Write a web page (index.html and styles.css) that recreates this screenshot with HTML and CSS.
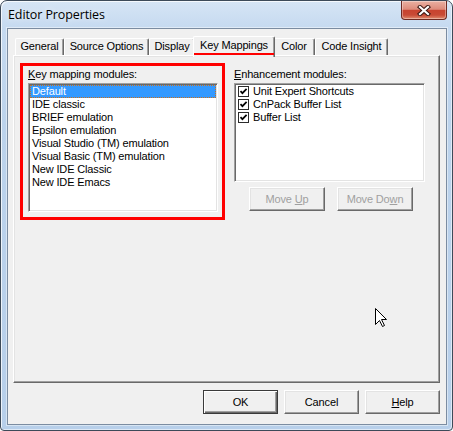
FILE: index.html
```html
<!DOCTYPE html>
<html>
<head>
<meta charset="utf-8">
<title>Editor Properties</title>
<link rel="stylesheet" href="styles.css">
</head>
<body>
<div class="window">
  <div class="titlebar">
    <span class="title">Editor Properties</span>
    <div class="close">
      <svg width="14" height="11" viewBox="0 0 14 11">
        <path d="M3 2 L11 9 M11 2 L3 9" stroke="#3b1712" stroke-width="4.2" stroke-linecap="square" fill="none"/>
        <path d="M3 2 L11 9 M11 2 L3 9" stroke="#ffffff" stroke-width="2.2" stroke-linecap="square" fill="none"/>
      </svg>
    </div>
  </div>
  <div class="client">
    <div class="tabs">
      <div class="tab t-general">General</div>
      <div class="tab t-source">Source Options</div>
      <div class="tab t-display">Display</div>
      <div class="tab active t-keys">Key Mappings</div>
      <div class="tab t-color">Color</div>
      <div class="tab t-code">Code Insight</div>
    </div>
    <div class="panel">
      <div class="mod-group">
        <div class="label"><u>K</u>ey mapping modules:</div>
        <div class="listbox keymaps">
          <div class="item selected">Default</div>
          <div class="item">IDE classic</div>
          <div class="item">BRIEF emulation</div>
          <div class="item">Epsilon emulation</div>
          <div class="item">Visual Studio (TM) emulation</div>
          <div class="item">Visual Basic (TM) emulation</div>
          <div class="item">New IDE Classic</div>
          <div class="item">New IDE Emacs</div>
        </div>
      </div>
      <div class="enh-group">
        <div class="label"><u>E</u>nhancement modules:</div>
        <div class="listbox checklist">
          <div class="item"><span class="check"><svg width="11" height="11" viewBox="0 0 11 11"><path d="M2.5 5.2 L4.4 7.2 L8.6 2.8" stroke="#000" stroke-width="1.7" fill="none"/></svg></span>Unit Expert Shortcuts</div>
          <div class="item"><span class="check"><svg width="11" height="11" viewBox="0 0 11 11"><path d="M2.5 5.2 L4.4 7.2 L8.6 2.8" stroke="#000" stroke-width="1.7" fill="none"/></svg></span>CnPack Buffer List</div>
          <div class="item"><span class="check"><svg width="11" height="11" viewBox="0 0 11 11"><path d="M2.5 5.2 L4.4 7.2 L8.6 2.8" stroke="#000" stroke-width="1.7" fill="none"/></svg></span>Buffer List</div>
        </div>
        <div class="move-buttons">
          <button class="btn" disabled>Move <u>U</u>p</button>
          <button class="btn" disabled>Move Do<u>w</u>n</button>
        </div>
      </div>
    </div>
    <div class="dlg-buttons">
      <button class="btn default">OK</button>
      <button class="btn">Cancel</button>
      <button class="btn"><u>H</u>elp</button>
    </div>
  </div>
  <svg class="cursor" width="13" height="20" viewBox="0 0 13 20">
    <path d="M0.5 0.5 L0.5 16.5 L4.5 12.5 L7.5 18.5 L9.5 17.5 L6.5 11.5 L11.5 11.5 Z" fill="#fff" stroke="#000" stroke-width="1"/>
  </svg>
</div>
</body>
</html>
```
FILE: styles.css
```css
* { box-sizing: border-box; }
html, body { margin: 0; padding: 0; }
body {
  width: 453px;
  height: 431px;
  overflow: hidden;
  background: #ffffff;
  font-family: "Liberation Sans", Arial, sans-serif;
  font-size: 11px;
  letter-spacing: -0.15px;
  color: #000;
}

.window {
  position: relative;
  width: 453px;
  height: 431px;
  border: 1px solid #3d4a59;
  border-radius: 7px 7px 4px 4px;
  background: linear-gradient(180deg, #d6e5f5 0px, #c6daf0 26px, #bcd3ec 120px, #b7cfea 100%);
  box-shadow: inset 1px 1px 0 rgba(255,255,255,0.75), inset -1px -1px 0 rgba(255,255,255,0.55);
  padding: 0 5px 5px 6px;
  display: flex;
  flex-direction: column;
}

.titlebar {
  height: 27px;
  display: flex;
  justify-content: space-between;
  align-items: flex-start;
  flex: none;
}
.title {
  font-family: "Open Sans", "Noto Sans", sans-serif;
  font-size: 12.5px;
  letter-spacing: -0.1px;
  line-height: 16px;
  margin: 6px 0 0 1px;
  color: #000;
  text-shadow: 0 0 6px rgba(255,255,255,0.9);
}
.close {
  width: 46px;
  height: 19px;
  margin-top: 0;
  border: 1px solid #6e2a22;
  border-top: none;
  border-radius: 0 0 4px 4px;
  background: linear-gradient(180deg, #eab0a2 0%, #dd8b7b 46%, #c8432f 52%, #c84a35 78%, #e08c6f 100%);
  box-shadow: inset 0 0 0 1px rgba(255,255,255,0.35);
  display: flex;
  align-items: center;
  justify-content: center;
}
.close svg { display: block; }

.client {
  flex: none;
  width: 440px;
  height: 397px;
  border: 1px solid #7b8ca1;
  background: #f0f0f0;
  box-shadow: 0 0 0 1px rgba(255,255,255,0.45);
  display: flex;
  flex-direction: column;
}

/* tabs */
.tabs {
  display: flex;
  align-items: flex-end;
  height: 19px;
  margin: 7px 0 0 7px;
  position: relative;
  z-index: 2;
}
.tab {
  height: 17px;
  line-height: 15px;
  text-align: center;
  white-space: nowrap;
  background: #f0f0f0;
  border-top: 1px solid #ffffff;
  border-left: 1px solid #ffffff;
  border-right: 1px solid #696969;
  box-shadow: inset -1px 0 0 #a0a0a0;
  border-radius: 2px 2px 0 0;
  flex: none;
}
.t-general { width: 49px; }
.t-source { width: 85px; }
.t-display { width: 46px; }
.t-keys { width: 82px; }
.t-color { width: 42px; }
.t-code { width: 73px; }
.tab.active {
  position: relative;
  z-index: 3;
  height: 21px;
  margin: 0 -2px -2px -2px;
  padding-top: 0;
  line-height: 16px;
}
.tab.active::after {
  content: "";
  position: absolute;
  left: 0;
  right: 0;
  top: 16px;
  height: 2px;
  background: #ff0000;
}

.panel {
  position: relative;
  z-index: 1;
  height: 328px;
  margin: 0 6px 0 5px;
  background: #f0f0f0;
  border-top: 1px solid #ffffff;
  border-left: 1px solid #ffffff;
  border-right: 1px solid #696969;
  border-bottom: 1px solid #696969;
  box-shadow: inset -1px -1px 0 #a0a0a0, inset 1px 1px 0 #e3e3e3;
  padding: 7px 0 0 6px;
  display: flex;
  align-items: flex-start;
  flex: none;
}

.label {
  height: 13px;
  line-height: 13px;
  white-space: nowrap;
}

.mod-group {
  width: 205px;
  height: 157px;
  border: 3px solid #ff0000;
  padding: 2px 4px 5px 5px;
  display: flex;
  flex-direction: column;
  gap: 2px;
  flex: none;
}

.listbox {
  background: #ffffff;
  border: 1px solid;
  border-color: #a0a0a0 #ffffff #ffffff #a0a0a0;
  box-shadow: inset 1px 1px 0 #696969, inset -1px -1px 0 #e3e3e3;
  padding: 1px;
}
.keymaps {
  width: 190px;
  height: 129px;
}
.item {
  height: 13px;
  line-height: 13px;
  padding-left: 2px;
  white-space: nowrap;
}
.item.selected {
  background: #3399ff;
  color: #ffffff;
  outline: 1px dotted #c9701f;
  outline-offset: -1px;
}

.enh-group {
  margin: 5px 0 0 9px;
  display: flex;
  flex-direction: column;
  gap: 2px;
  flex: none;
}
.checklist {
  width: 191px;
  height: 99px;
}
.checklist .item {
  display: flex;
  align-items: center;
}
.check {
  width: 11px;
  height: 11px;
  border: 1px solid #2b2b2b;
  background: #fff;
  margin-right: 4px;
  position: relative;
  flex: none;
}
.check svg {
  position: absolute;
  left: -1px;
  top: -1px;
}

.move-buttons {
  display: flex;
  gap: 12px;
  padding-left: 15px;
  margin-top: 3px;
}

.btn {
  width: 76px;
  height: 24px;
  padding: 0;
  font: inherit;
  letter-spacing: inherit;
  color: #000;
  background: #f0f0f0;
  border: 1px solid;
  border-color: #ffffff #696969 #696969 #ffffff;
  box-shadow: inset -1px -1px 0 #a0a0a0, inset 1px 1px 0 #e3e3e3;
  border-radius: 0;
  text-align: center;
}
.btn:disabled {
  color: #a0a0a0;
}
.dlg-buttons {
  display: flex;
  justify-content: flex-end;
  gap: 6px;
  margin: 7px 6px 0 0;
}
.dlg-buttons .btn { width: 75px; }
.btn.default {
  border: 1px solid #3a3a3a;
  box-shadow: inset 1px 1px 0 #ffffff, inset -1px -1px 0 #696969, inset -2px -2px 0 #a0a0a0;
}

.cursor {
  position: absolute;
  left: 374px;
  top: 307px;
  z-index: 10;
}
```
